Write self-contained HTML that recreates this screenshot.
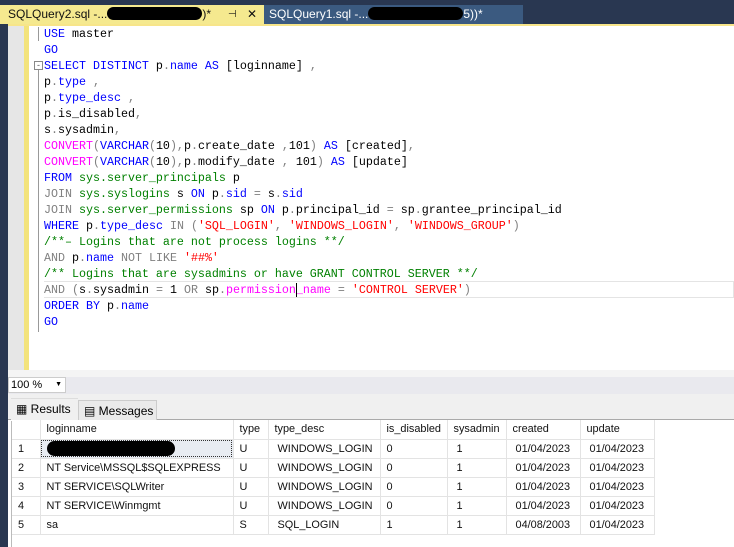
<!DOCTYPE html>
<html><head><meta charset="utf-8"><style>
*{margin:0;padding:0;box-sizing:border-box}
body{width:734px;height:547px;overflow:hidden;background:#fff;position:relative;font-family:"Liberation Sans",sans-serif}
.abs{position:absolute}
.code{position:absolute;left:44px;font-family:"Liberation Mono",monospace;font-size:11.67px;line-height:16px;white-space:pre;color:#000}
.k{color:#0000ff}.g{color:#808080}.gr{color:#008000}.m{color:#ff00ff}.r{color:#ff0000}
table{border-collapse:collapse;font-size:10.9px;position:absolute;left:12px;top:420px;table-layout:fixed}
td{height:19px;border-right:1px solid #e3e3e3;border-bottom:1px solid #e3e3e3;padding:0 0 0 6px;white-space:nowrap;overflow:hidden;color:#111}
</style></head><body>
<div class="abs" style="left:0;top:0;width:734px;height:24px;background:#293751"></div>
<div class="abs" style="left:0;top:5px;width:264px;height:19px;background:#f5e98f;font-size:12px;line-height:19px;padding-left:8px;color:#111;white-space:nowrap">SQLQuery2.sql -...<span style="display:inline-block;width:95px;height:13px;background:#000;border-radius:7px;vertical-align:-2px"></span>)* <span style="position:absolute;left:228px;font-size:10px">⊣</span><span style="position:absolute;left:247px">✕</span></div>
<div class="abs" style="left:264px;top:5px;width:259px;height:19px;background:#3b5a80;font-size:12px;line-height:19px;padding-left:5px;color:#fff;white-space:nowrap">SQLQuery1.sql -...<span style="display:inline-block;width:95px;height:13px;background:#000;border-radius:7px;vertical-align:-2px"></span>5))*</div>
<div class="abs" style="left:0;top:24px;width:734px;height:2px;background:#f7e58a"></div>
<div class="abs" style="left:0;top:24px;width:8px;height:523px;background:#293751"></div>
<div class="abs" style="left:8px;top:26px;width:16px;height:344px;background:#e6e6e6"></div>
<div class="abs" style="left:24px;top:26px;width:5px;height:344px;background:#f3e37c"></div>
<div class="abs" style="left:38px;top:27px;width:1px;height:14px;background:#999"></div>
<div class="abs" style="left:34px;top:61px;width:9px;height:9px;border:1px solid #888;font-size:9px;line-height:7px;text-align:center;color:#555">-</div>
<div class="abs" style="left:38px;top:70px;width:1px;height:262px;background:#999"></div>
<div class="abs" style="left:44px;top:281px;width:690px;height:17px;border:1px solid #e4e4e4;border-left:none"></div>
<div class="code" style="top:26px"><span class="k">USE</span> master
<span class="k">GO</span>
<span class="k">SELECT DISTINCT</span> p<span class="g">.</span><span class="k">name</span> <span class="k">AS</span> [loginname] <span class="g">,</span>
p<span class="g">.</span><span class="k">type</span> <span class="g">,</span>
p<span class="g">.</span><span class="k">type_desc</span> <span class="g">,</span>
p<span class="g">.</span>is_disabled<span class="g">,</span>
s<span class="g">.</span>sysadmin<span class="g">,</span>
<span class="m">CONVERT</span><span class="g">(</span><span class="k">VARCHAR</span><span class="g">(</span>10<span class="g">),</span>p<span class="g">.</span>create_date <span class="g">,</span>101<span class="g">)</span> <span class="k">AS</span> [created]<span class="g">,</span>
<span class="m">CONVERT</span><span class="g">(</span><span class="k">VARCHAR</span><span class="g">(</span>10<span class="g">),</span>p<span class="g">.</span>modify_date <span class="g">,</span> 101<span class="g">)</span> <span class="k">AS</span> [update]
<span class="k">FROM</span> <span class="gr">sys.server_principals</span> p
<span class="g">JOIN</span> <span class="gr">sys.syslogins</span> s <span class="k">ON</span> p<span class="g">.</span><span class="k">sid</span> <span class="g">=</span> s<span class="g">.</span><span class="k">sid</span>
<span class="g">JOIN</span> <span class="gr">sys.server_permissions</span> sp <span class="k">ON</span> p<span class="g">.</span>principal_id <span class="g">=</span> sp<span class="g">.</span>grantee_principal_id
<span class="k">WHERE</span> p<span class="g">.</span><span class="k">type_desc</span> <span class="g">IN (</span><span class="r">'SQL_LOGIN'</span><span class="g">,</span> <span class="r">'WINDOWS_LOGIN'</span><span class="g">,</span> <span class="r">'WINDOWS_GROUP'</span><span class="g">)</span>
<span class="gr">/**– Logins that are not process logins **/</span>
<span class="g">AND</span> p<span class="g">.</span><span class="k">name</span> <span class="g">NOT LIKE</span> <span class="r">'##%'</span>
<span class="gr">/** Logins that are sysadmins or have GRANT CONTROL SERVER **/</span>
<span class="g">AND (</span>s<span class="g">.</span>sysadmin <span class="g">=</span> 1 <span class="g">OR</span> sp<span class="g">.</span><span class="m">permission_name</span> <span class="g">=</span> <span class="r">'CONTROL SERVER'</span><span class="g">)</span>
<span class="k">ORDER BY</span> p<span class="g">.</span><span class="k">name</span>
<span class="k">GO</span></div>
<div class="abs" style="left:296px;top:283px;width:1px;height:14px;background:#000"></div>
<div class="abs" style="left:8px;top:370px;width:726px;height:7px;background:#f4f4f4"></div>
<div class="abs" style="left:8px;top:377px;width:726px;height:17px;background:#e9e9ee"></div>
<div class="abs" style="left:8px;top:377px;width:58px;height:16px;background:#fff;border:1px solid #ccc;font-size:11px;line-height:14px;padding-left:2px">100 %<span style="position:absolute;right:3px;font-size:7px">▼</span></div>
<div class="abs" style="left:8px;top:394px;width:726px;height:26px;background:#f0f0f0;border-bottom:1px solid #aaa"></div>
<div class="abs" style="left:11px;top:398px;width:67px;height:22px;background:#f0f0f0;font-size:12px;line-height:20px;padding-left:5px;border-top:1px solid #ddd">▦ Results</div>
<div class="abs" style="left:78px;top:400px;width:79px;height:20px;background:#eaeaea;border:1px solid #ccc;border-bottom:none;font-size:12px;line-height:20px;padding-left:5px">▤ Messages</div>
<div class="abs" style="left:8px;top:421px;width:4px;height:126px;background:#fff;border-right:1px solid #bbb"></div>
<table>
<colgroup><col style="width:28px"><col style="width:193px"><col style="width:35px"><col style="width:112px"><col style="width:67px"><col style="width:59px"><col style="width:74px"><col style="width:74px"></colgroup>
<tr><td></td><td>loginname</td><td>type</td><td>type_desc</td><td>is_disabled</td><td>sysadmin</td><td>created</td><td>update</td></tr>
<tr><td>1</td><td style="background:#e8ecf2;outline:1px dotted #333;outline-offset:-2px"><span style="display:inline-block;width:128px;height:15px;background:#000;border-radius:8px;vertical-align:middle"></span></td><td>U</td><td>&nbsp;WINDOWS_LOGIN</td><td>0</td><td>&nbsp;1</td><td>&nbsp;01/04/2023</td><td>&nbsp;01/04/2023</td></tr>
<tr><td>2</td><td>NT Service\MSSQL$SQLEXPRESS</td><td>U</td><td>&nbsp;WINDOWS_LOGIN</td><td>0</td><td>&nbsp;1</td><td>&nbsp;01/04/2023</td><td>&nbsp;01/04/2023</td></tr>
<tr><td>3</td><td>NT SERVICE\SQLWriter</td><td>U</td><td>&nbsp;WINDOWS_LOGIN</td><td>0</td><td>&nbsp;1</td><td>&nbsp;01/04/2023</td><td>&nbsp;01/04/2023</td></tr>
<tr><td>4</td><td>NT SERVICE\Winmgmt</td><td>U</td><td>&nbsp;WINDOWS_LOGIN</td><td>0</td><td>&nbsp;1</td><td>&nbsp;01/04/2023</td><td>&nbsp;01/04/2023</td></tr>
<tr><td>5</td><td>sa</td><td>S</td><td>&nbsp;SQL_LOGIN</td><td>1</td><td>&nbsp;1</td><td>&nbsp;04/08/2003</td><td>&nbsp;01/04/2023</td></tr>
</table>
</body></html>
